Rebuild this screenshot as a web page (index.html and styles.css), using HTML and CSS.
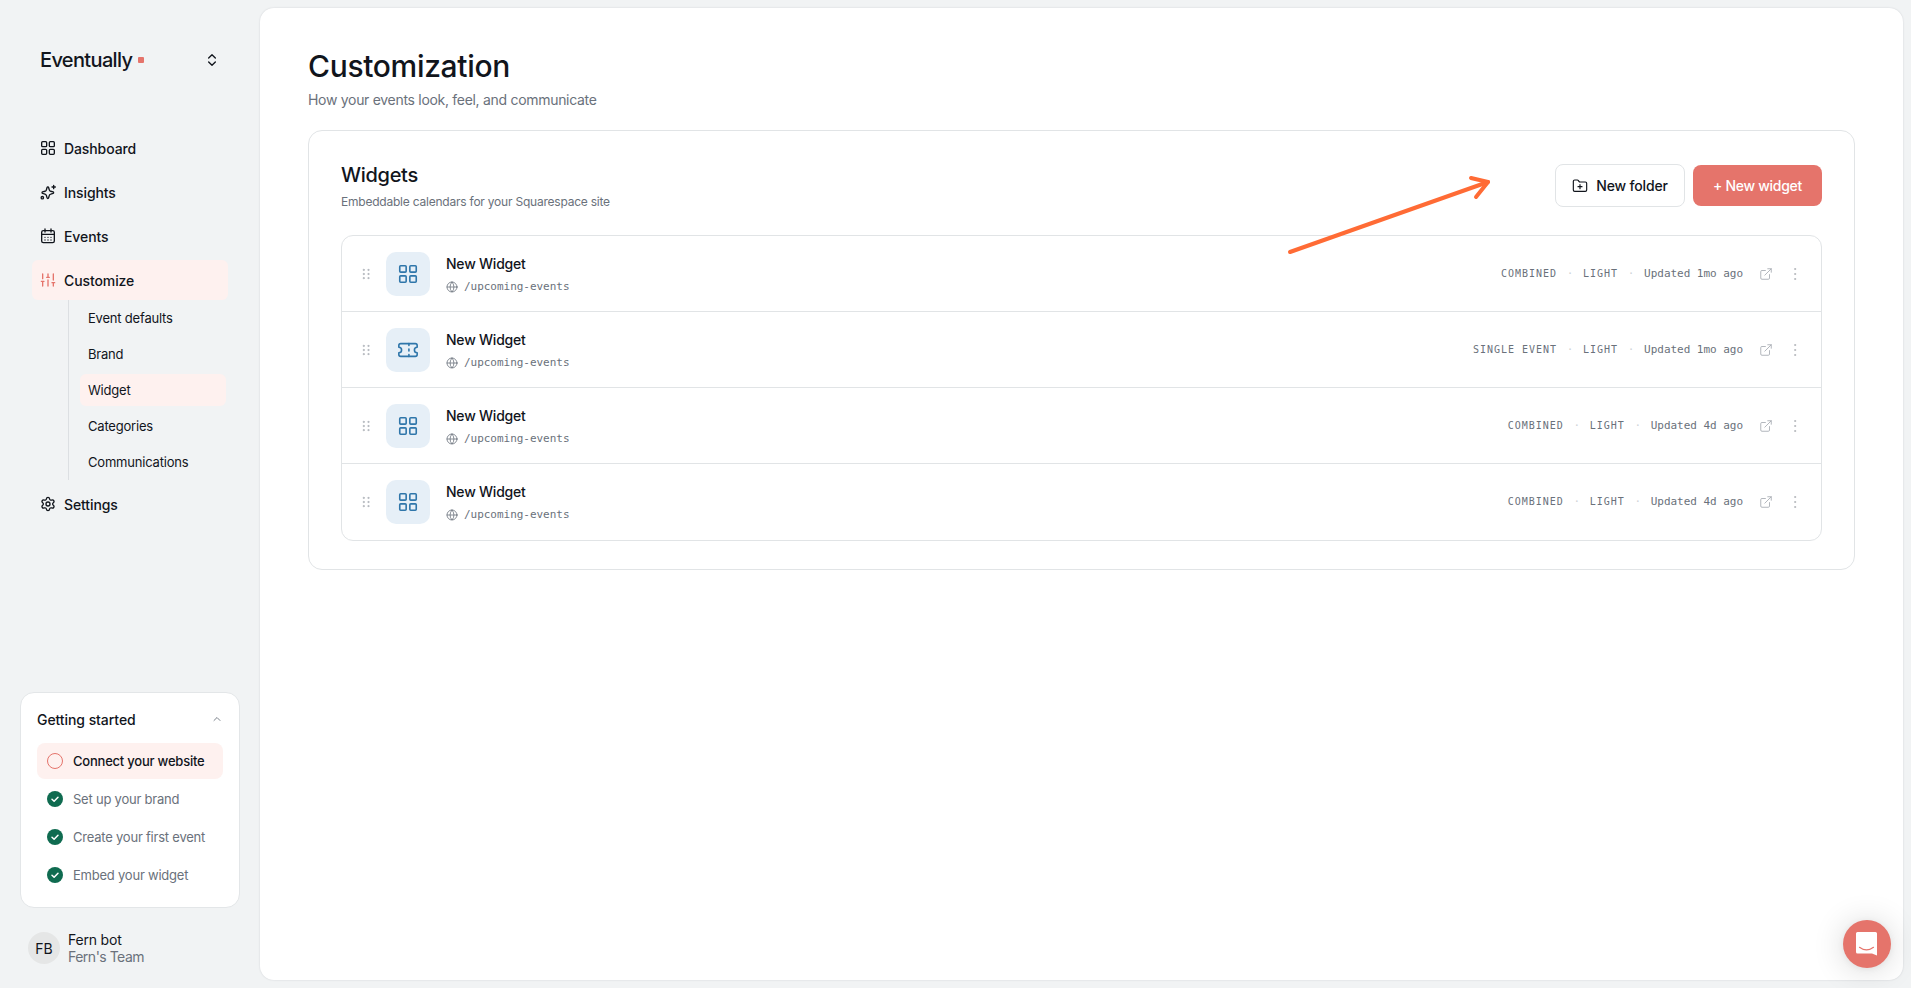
FILE: index.html
```html
<!DOCTYPE html>
<html lang="en">
<head>
<meta charset="utf-8">
<title>Customization</title>
<link rel="stylesheet" href="styles.css">
</head>
<body>
<svg class="sprite" width="0" height="0">
  <symbol id="grid" viewBox="0 0 24 24"><rect x="3" y="3" width="7" height="7" rx="1"/><rect x="14" y="3" width="7" height="7" rx="1"/><rect x="14" y="14" width="7" height="7" rx="1"/><rect x="3" y="14" width="7" height="7" rx="1"/></symbol>
  <symbol id="ticket" viewBox="0 0 24 24"><path d="M2 9a3 3 0 0 1 0 6v2a2 2 0 0 0 2 2h16a2 2 0 0 0 2-2v-2a3 3 0 0 1 0-6V7a2 2 0 0 0-2-2H4a2 2 0 0 0-2 2Z"/><path d="M13 5v2M13 17v2M13 11v2"/></symbol>
  <symbol id="globe" viewBox="0 0 24 24"><circle cx="12" cy="12" r="10"/><path d="M12 2a14.5 14.5 0 0 0 0 20 14.5 14.5 0 0 0 0-20M2 12h20"/></symbol>
  <symbol id="external" viewBox="0 0 24 24"><path d="M15 3h6v6M10 14 21 3M18 13v6a2 2 0 0 1-2 2H5a2 2 0 0 1-2-2V8a2 2 0 0 1 2-2h6"/></symbol>
  <symbol id="more" viewBox="0 0 24 24"><circle cx="12" cy="12" r="1"/><circle cx="12" cy="4.5" r="1"/><circle cx="12" cy="19.5" r="1"/></symbol>
  <symbol id="grip" viewBox="0 0 24 24"><circle cx="8" cy="12" r="1"/><circle cx="8" cy="5" r="1"/><circle cx="8" cy="19" r="1"/><circle cx="16" cy="12" r="1"/><circle cx="16" cy="5" r="1"/><circle cx="16" cy="19" r="1"/></symbol>
  <symbol id="done" viewBox="0 0 16 16"><circle cx="8" cy="8" r="8" fill="#0f6b50" stroke="none"/><path d="m5 8.2 2.1 2L11 6.2" stroke="#fff" stroke-width="1.5"/></symbol>
</svg>
<div class="app">
  <aside class="sidebar">
    <div class="brand">
      <span class="brand-name">Eventually</span><span class="brand-dot"></span>
      <svg class="icon brand-switch" viewBox="0 0 24 24"><path d="m7 15 5 5 5-5M7 9l5-5 5 5"/></svg>
    </div>
    <nav class="nav">
      <a class="nav-item"><svg class="icon" viewBox="0 0 24 24"><rect x="2.500" y="2.500" width="7.500" height="7.500" rx="1.500"/><rect x="14" y="2.500" width="7.500" height="7.500" rx="1.500"/><rect x="14" y="14" width="7.500" height="7.500" rx="1.500"/><rect x="2.500" y="14" width="7.500" height="7.500" rx="1.500"/></svg><span>Dashboard</span></a>
      <a class="nav-item"><svg class="icon" viewBox="0 0 24 24"><path d="M10.6 5.2a1.2 1.2 0 0 1 2.3 0l1 3.5a3 3 0 0 0 2.2 2.2l3.6 1a1.2 1.2 0 0 1 0 2.2l-3.6 1a3 3 0 0 0-2.2 2.2l-1 3.6a1.2 1.2 0 0 1-2.3 0l-1-3.6a3 3 0 0 0-2.1-2.2l-3.7-1a1.2 1.2 0 0 1 0-2.2l3.7-1a3 3 0 0 0 2.1-2.2z"/><path d="M20.5 2v5M18 4.5h5"/><circle cx="3.5" cy="20.5" r="1.8"/></svg><span>Insights</span></a>
      <a class="nav-item"><svg class="icon" viewBox="0 0 24 24"><rect x="2.5" y="4" width="19" height="18" rx="2.5"/><path d="M7.5 1.5v4.500M16.500 1.500v4.500M2.500 9.500h19M7.500 14h.01M12 14h.01M16.500 14h.01M7.500 18h.01M12 18h.01M16.500 18h.01"/></svg><span>Events</span></a>
      <a class="nav-item active"><svg class="icon" viewBox="0 0 24 24"><path d="M4 21v-7M4 10V3M12 21v-9M12 8V3M20 21v-5M20 12V3M2 14h4M10 8h4M18 16h4"/></svg><span>Customize</span></a>
      <div class="subnav">
        <a class="sub-item">Event defaults</a>
        <a class="sub-item">Brand</a>
        <a class="sub-item active">Widget</a>
        <a class="sub-item">Categories</a>
        <a class="sub-item">Communications</a>
      </div>
      <a class="nav-item"><svg class="icon" viewBox="0 0 24 24"><path d="M9.670 4.140a2.340 2.340 0 0 1 4.660 0 2.340 2.340 0 0 0 3.320 1.910 2.340 2.340 0 0 1 2.330 4.030 2.340 2.340 0 0 0 0 3.840 2.340 2.340 0 0 1-2.330 4.030 2.340 2.340 0 0 0-3.320 1.910 2.340 2.340 0 0 1-4.660 0 2.340 2.340 0 0 0-3.320-1.910 2.340 2.340 0 0 1-2.330-4.030 2.340 2.340 0 0 0 0-3.840 2.340 2.340 0 0 1 2.330-4.030 2.340 2.340 0 0 0 3.320-1.910"/><circle cx="12" cy="12" r="3"/></svg><span>Settings</span></a>
    </nav>
    <section class="started">
      <header class="started-head"><span>Getting started</span><svg class="icon" viewBox="0 0 24 24"><path d="m18 15-6-6-6 6"/></svg></header>
      <div class="step current"><span class="ring"></span><span>Connect your website</span></div>
      <div class="step"><svg class="icon"><use href="#done"/></svg><span>Set up your brand</span></div>
      <div class="step"><svg class="icon"><use href="#done"/></svg><span>Create your first event</span></div>
      <div class="step"><svg class="icon"><use href="#done"/></svg><span>Embed your widget</span></div>
    </section>
    <div class="user">
      <span class="avatar">FB</span>
      <div class="user-text"><div>Fern bot</div><div class="team">Fern's Team</div></div>
    </div>
  </aside>
  <main class="main">
    <h1 class="title">Customization</h1>
    <p class="subtitle">How your events look, feel, and communicate</p>
    <section class="card">
      <header class="card-head">
        <div>
          <h2 class="card-title">Widgets</h2>
          <p class="card-sub">Embeddable calendars for your Squarespace site</p>
        </div>
        <div class="actions">
          <button class="btn"><svg class="icon" viewBox="0 0 24 24"><path d="M12 10v6M9 13h6M20 20a2 2 0 0 0 2-2V8a2 2 0 0 0-2-2h-7.900a2 2 0 0 1-1.690-.9L9.600 3.900A2 2 0 0 0 7.930 3H4a2 2 0 0 0-2 2v13a2 2 0 0 0 2 2Z"/></svg><span>New folder</span></button>
          <button class="btn primary"><span>+ New widget</span></button>
        </div>
      </header>
      <div class="list">
        <div class="row">
          <svg class="icon grip"><use href="#grip"/></svg>
          <span class="tile"><svg class="icon"><use href="#grid"/></svg></span>
          <div class="info"><div class="name">New Widget</div><div class="url"><svg class="icon"><use href="#globe"/></svg><span>/upcoming-events</span></div></div>
          <div class="meta"><span class="tag">COMBINED</span><span class="sep">·</span><span class="tag">LIGHT</span><span class="sep">·</span><span class="when">Updated 1mo ago</span></div>
          <svg class="icon link"><use href="#external"/></svg><svg class="icon more"><use href="#more"/></svg>
        </div>
        <div class="row">
          <svg class="icon grip"><use href="#grip"/></svg>
          <span class="tile"><svg class="icon"><use href="#ticket"/></svg></span>
          <div class="info"><div class="name">New Widget</div><div class="url"><svg class="icon"><use href="#globe"/></svg><span>/upcoming-events</span></div></div>
          <div class="meta"><span class="tag">SINGLE EVENT</span><span class="sep">·</span><span class="tag">LIGHT</span><span class="sep">·</span><span class="when">Updated 1mo ago</span></div>
          <svg class="icon link"><use href="#external"/></svg><svg class="icon more"><use href="#more"/></svg>
        </div>
        <div class="row">
          <svg class="icon grip"><use href="#grip"/></svg>
          <span class="tile"><svg class="icon"><use href="#grid"/></svg></span>
          <div class="info"><div class="name">New Widget</div><div class="url"><svg class="icon"><use href="#globe"/></svg><span>/upcoming-events</span></div></div>
          <div class="meta"><span class="tag">COMBINED</span><span class="sep">·</span><span class="tag">LIGHT</span><span class="sep">·</span><span class="when">Updated 4d ago</span></div>
          <svg class="icon link"><use href="#external"/></svg><svg class="icon more"><use href="#more"/></svg>
        </div>
        <div class="row">
          <svg class="icon grip"><use href="#grip"/></svg>
          <span class="tile"><svg class="icon"><use href="#grid"/></svg></span>
          <div class="info"><div class="name">New Widget</div><div class="url"><svg class="icon"><use href="#globe"/></svg><span>/upcoming-events</span></div></div>
          <div class="meta"><span class="tag">COMBINED</span><span class="sep">·</span><span class="tag">LIGHT</span><span class="sep">·</span><span class="when">Updated 4d ago</span></div>
          <svg class="icon link"><use href="#external"/></svg><svg class="icon more"><use href="#more"/></svg>
        </div>
      </div>
    </section>
  </main>
</div>
<svg class="arrow" viewBox="0 0 210 90"><path d="M10 81 208 11"/><path d="m191 7 17 4-12 15"/></svg>
<button class="chat" aria-label="Open chat"><svg viewBox="0 0 24 26"><path d="M2.500 1h18A1.500 1.500 0 0 1 22 2.500V24.500l-5-2H2.500A1.500 1.500 0 0 1 1 21V2.500A1.500 1.500 0 0 1 2.500 1Z" fill="#fff"/><path d="M4.500 16.300c4.300 3.300 9.700 3.300 14 0" fill="none" stroke="#e5746b" stroke-width="1.200" stroke-linecap="round"/></svg></button>
</body>
</html>
```
FILE: styles.css
```css
* { box-sizing: border-box; }
body {
  margin: 0;
  height: 988px;
  overflow: hidden;
  background: #f1f3f4;
  color: #11151c;
  font-family: Inter, "Liberation Sans", sans-serif;
  font-size: 14px;
}
h1, h2, p { margin: 0; font-weight: 400; }
button { font: inherit; color: inherit; }
.sprite { display: block; position: absolute; }
.icon {
  display: block;
  flex: none;
  width: 16px;
  height: 16px;
  fill: none;
  stroke: currentColor;
  stroke-width: 2;
  stroke-linecap: round;
  stroke-linejoin: round;
}
.app { display: flex; height: 988px; padding: 8px 8px 8px 0; }

/* Sidebar */
.sidebar { width: 260px; flex: none; display: flex; flex-direction: column; margin: -8px 0; }
.brand { display: flex; align-items: center; height: 40px; margin: 40px 40px 0; }
.brand-name { font-size: 20px; font-weight: 500; letter-spacing: -0.65px; }
.brand-dot { width: 6px; height: 6px; margin-left: 6px; border-radius: 1px; background: #e5746b; }
.brand-switch { margin-left: auto; }
.nav { display: flex; flex-direction: column; gap: 4px; padding: 48px 32px 0; }
.nav-item { display: flex; align-items: center; gap: 8px; height: 40px; padding: 0 8px; border-radius: 6px; font-weight: 500; letter-spacing: -0.1px; }
.nav-item.active, .sub-item.active, .step.current { background: #fef1ef; }
.nav-item.active .icon { color: #e5746b; }
.subnav { margin: -4px 0 0 36px; border-left: 1px solid #dcdfe2; padding: 2px 2px 2px 11px; display: flex; flex-direction: column; gap: 4px; }
.sub-item { display: flex; align-items: center; height: 32px; padding: 0 8px; border-radius: 6px; font-size: 13px; letter-spacing: -0.2px; }
.started { margin: auto 20px 0; height: 216px; padding: 12px 16px; border: 1px solid #e3e6e8; border-radius: 14px; background: #fff; display: flex; flex-direction: column; gap: 2px; }
.started-head { display: flex; align-items: center; justify-content: space-between; height: 28px; margin-bottom: 8px; font-weight: 500; letter-spacing: -0.07px; }
.started-head .icon { width: 12px; height: 12px; color: #7b828b; }
.step { display: flex; align-items: center; gap: 10px; height: 36px; padding: 0 10px; border-radius: 8px; font-size: 13px; letter-spacing: -0.22px; color: #6a717b; }
.step.current { color: #11151c; font-weight: 500; }
.ring { width: 16px; height: 16px; border: 1px solid #e5746b; border-radius: 50%; }
.user { display: flex; align-items: center; gap: 8px; height: 40px; margin: 20px 28px; }
.avatar { display: grid; place-items: center; width: 32px; height: 32px; border-radius: 50%; background: #e5e6e6; }
.user-text { line-height: 17px; letter-spacing: -0.2px; }
.team { color: #6a717b; letter-spacing: -0.5px; }

/* Content */
.main { flex: 1; padding: 40px 48px; border-radius: 14px; background: #fff; box-shadow: 0 0 2px #0f172a26; }
.title { font-size: 30px; line-height: 36px; font-weight: 500; letter-spacing: -0.33px; }
.subtitle { margin-top: 6px; line-height: 20px; letter-spacing: -0.3px; color: #6a717b; }
.card { margin-top: 20px; height: 440px; padding: 32px; border: 1px solid #e1e4e6; border-radius: 14px; }
.card-head { display: flex; justify-content: space-between; height: 72px; }
.card-title { margin-top: -2px; font-size: 20px; line-height: 28px; font-weight: 500; letter-spacing: -0.3px; }
.card-sub { margin-top: 5px; font-size: 12px; line-height: 16px; letter-spacing: -0.22px; color: #6a717b; }
.actions { display: flex; align-items: center; gap: 8px; height: 43px; margin-top: 1px; }
.btn { display: flex; align-items: center; justify-content: center; gap: 8px; width: 130px; height: 43px; padding: 0; border: 1px solid #e1e4e6; border-radius: 8px; background: #fff; font-weight: 500; letter-spacing: -0.18px; }
.btn .icon { stroke-width: 1.75; }
.btn.primary { width: 129px; height: 41px; border: 0; background: #e5746b; color: #fff; letter-spacing: -0.3px; }
.list { padding-bottom: 1px; border: 1px solid #e1e4e6; border-radius: 12px; }
.row { display: flex; align-items: center; height: 76px; padding: 1px 18px 0 17px; }
.row:first-child { height: 75px; }
.row + .row { border-top: 1px solid #e1e4e6; }
.grip { color: #a8adb4; width: 14px; height: 14px; stroke-width: 1.5; }
.tile { display: grid; place-items: center; width: 44px; height: 44px; margin: 0 16px 0 13px; border-radius: 10px; background: #e6eff7; color: #2f76aa; }
.tile .icon { width: 22px; height: 22px; stroke-width: 1.75; }
.name { font-weight: 500; line-height: 20px; letter-spacing: -0.22px; }
.url { display: flex; align-items: center; gap: 6px; margin-top: 5px; color: #6a717b; font: 11px/16px "DejaVu Sans Mono", monospace; letter-spacing: -0.03px; }
.url .icon { width: 12px; height: 12px; stroke-width: 1.6; }
.meta { display: flex; align-items: center; margin-left: auto; color: #6a717b; font: 11px/16px "DejaVu Sans Mono", monospace; letter-spacing: -0.03px; }
.tag { font-size: 10px; letter-spacing: 0.98px; }
.sep { width: 26px; text-align: center; color: #d0d4d8; }
.link { width: 14px; height: 14px; margin: 0 0 0 16px; color: #a8adb4; stroke-width: 1.5; }
.more { width: 16px; height: 16px; margin-left: 14px; color: #8a9098; stroke-width: 0.7; }

/* Overlays */
.arrow { position: absolute; left: 1280px; top: 171px; width: 210px; height: 90px; overflow: visible; fill: none; stroke: #ff6b35; stroke-width: 4; stroke-linecap: round; stroke-linejoin: round; }
.chat { position: absolute; left: 1843px; top: 920px; width: 48px; height: 48px; display: grid; place-items: center; padding: 0; border: 0; border-radius: 50%; background: #e5746b; box-shadow: 0 1px 6px #0000000f, 0 2px 32px #00000029; }
.chat svg { width: 24px; height: 26px; }
```
